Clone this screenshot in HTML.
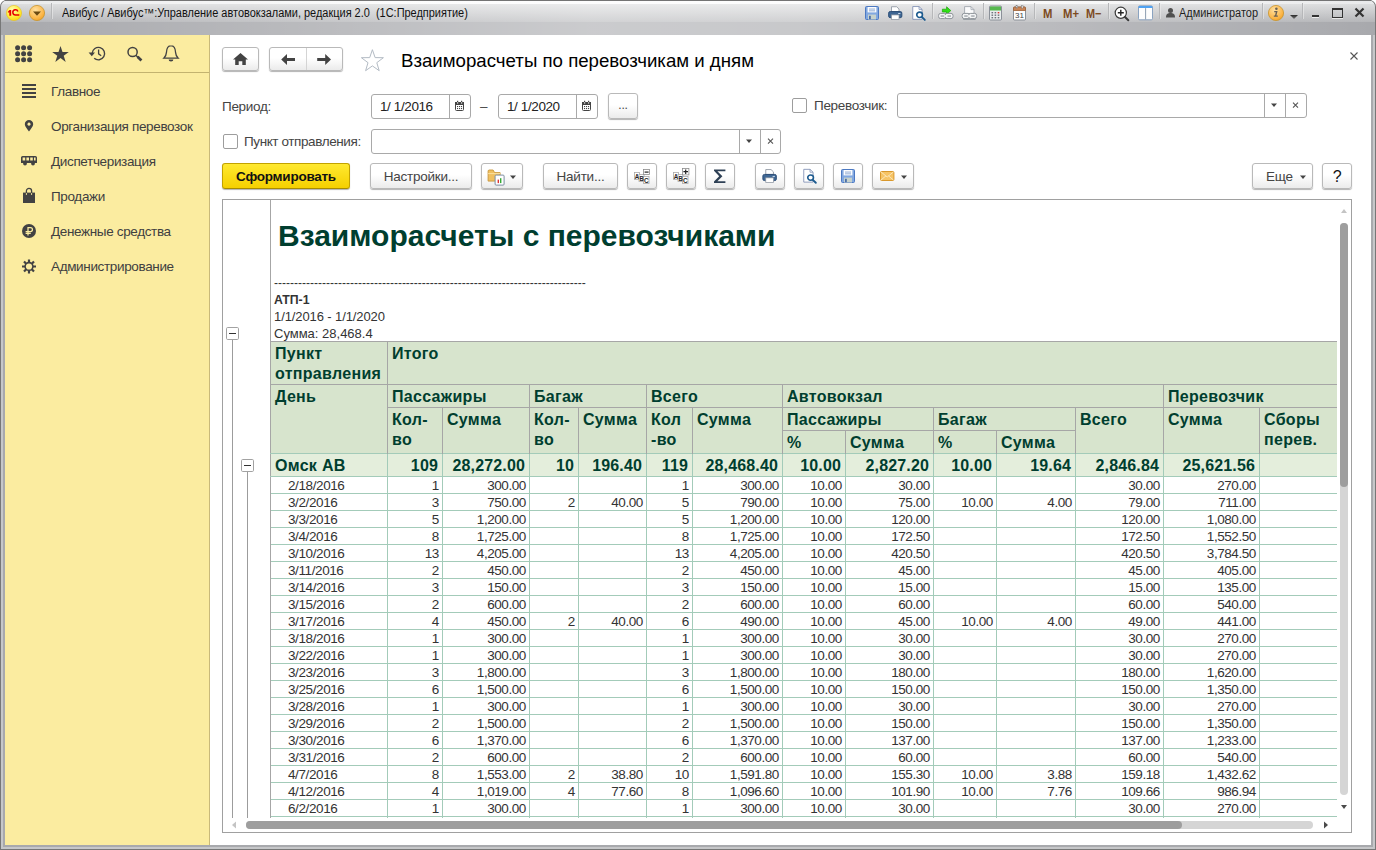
<!DOCTYPE html>
<html lang="ru"><head><meta charset="utf-8"><title>1C</title>
<style>
*{box-sizing:border-box;margin:0;padding:0}
html,body{width:1376px;height:850px;overflow:hidden}
body{font-family:"Liberation Sans",sans-serif;font-size:13px;color:#333;background:#fff;position:relative}
.abs{position:absolute}
#frame{position:absolute;left:0;top:0;width:1376px;height:850px;background:#a8a9ad;border-radius:7px 7px 0 0;box-shadow:inset 0 0 0 1px #777,inset 0 0 0 3px #c6c7c9}
#tbar{position:absolute;left:1px;top:0;width:1374px;height:35px;border-radius:7px 7px 0 0;background:linear-gradient(to right,rgba(255,255,255,0) 0,rgba(255,255,255,.85) 30%,rgba(255,255,255,.85) 70%,rgba(255,255,255,0) 100%) 0 1px/100% 3px no-repeat,linear-gradient(to right,rgba(255,255,255,0) 0,rgba(255,255,255,.4) 43%,rgba(255,255,255,.37) 58%,rgba(255,255,255,0) 100%),linear-gradient(#6e6e6e 0,#6e6e6e 1px,#e9eaeb 1px,#e9eaeb 3.5px,#dcddde 4.5px,#b6b7ba 21.5px,#a8a9ad 22px,#a8a9ad 35px)}
#ttl{position:absolute;left:62px;top:5px;font-size:12px;line-height:16px;color:#111;white-space:pre;transform:scaleX(.913);transform-origin:0 0}
#side{position:absolute;left:5px;top:35px;width:205px;height:810px;background:#fbeca0;border-right:1px solid #c9b97a}
#sidetb{position:absolute;left:0;top:0;width:204px;height:38px;border-bottom:1px solid #c3b36f}
.mi{position:absolute;left:46px;font-size:13.5px;color:#404040;white-space:nowrap;letter-spacing:-0.35px;line-height:16px}
#main{position:absolute;left:210px;top:35px;width:1161px;height:810px;background:#fff}
.btn{position:absolute;height:25px;border:1px solid #b9b9b9;border-radius:3px;background:linear-gradient(#fff 0,#fff 45%,#ebebeb 100%);box-shadow:0 1px 1px rgba(0,0,0,.3);font-size:13.5px;letter-spacing:-0.25px;color:#444;text-align:center;line-height:23px;white-space:nowrap}
.inp{position:absolute;height:25px;border:1px solid #a9a9a9;border-radius:3px;background:#fff}
.lbl{position:absolute;font-size:13.5px;letter-spacing:-0.3px;color:#444;white-space:nowrap}
.chk{position:absolute;width:15px;height:15px;border:1px solid #9d9d9d;border-radius:2px;background:#fff}
#rep{position:absolute;left:222px;top:199px;width:1130px;height:634px;border:1px solid #a0a0a0;background:#fff;overflow:hidden}
/* table */
.r{position:absolute;left:271px;width:1066px;height:17px;border-bottom:1px solid #a3cbb9}
.c{position:absolute;top:0;height:17px;font-size:13.5px;line-height:17px;color:#333;white-space:nowrap;overflow:hidden}
.c.n{text-align:right;padding-right:3.2px;letter-spacing:-0.45px}
.c.d{padding-left:17px;letter-spacing:-0.4px}
.vl{position:absolute;width:1px;background:#a3cbb9}
.hl{position:absolute;height:1px;background:#a6a6a6}
.hv{position:absolute;width:1px;background:#a6a6a6}
.h{position:absolute;font-weight:bold;font-size:16px;color:#003e2f;line-height:20px;white-space:nowrap;letter-spacing:0.3px}
.gb{position:absolute;font-weight:bold;font-size:16px;color:#003e2f;line-height:23px;white-space:nowrap;text-align:right;top:454px;height:23px;letter-spacing:0.15px}
</style></head><body>
<div id="frame"></div>
<div id="tbar"></div><div class="abs" style="left:5px;top:0;width:1366px;height:1px;background:#747474"></div>
<div id="ttl">Авибус / Авибус™:Управление автовокзалами, редакция 2.0  (1С:Предприятие)</div>
<div id="side"><div id="sidetb"></div>
<div class="mi" style="top:49px">Главное</div>
<div class="mi" style="top:84px">Организация перевозок</div>
<div class="mi" style="top:119px">Диспетчеризация</div>
<div class="mi" style="top:154px">Продажи</div>
<div class="mi" style="top:189px">Денежные средства</div>
<div class="mi" style="top:224px">Администрирование</div>
</div>
<div id="main"></div>
<!-- header bar of form -->
<div class="btn" style="left:222px;top:47px;width:37px;height:24px"></div>
<div class="btn" style="left:269px;top:47px;width:74px;height:24px"></div>
<div class="abs" style="left:306px;top:48px;width:1px;height:22px;background:#d4d4d4"></div>
<div class="abs" id="ftitle" style="left:401px;top:50px;font-size:18.67px;color:#000;white-space:nowrap">Взаиморасчеты по перевозчикам и дням</div>
<!-- row1 -->
<div class="lbl" style="left:222px;top:99px">Период:</div>
<div class="inp" style="left:371px;top:94px;width:100px"></div>
<div class="abs" style="left:449px;top:95px;width:1px;height:23px;background:#a9a9a9"></div>
<div class="lbl" style="left:380px;top:99px;color:#222;letter-spacing:-0.4px">1/ 1/2016</div>
<div class="lbl" style="left:480px;top:99px">–</div>
<div class="inp" style="left:498px;top:94px;width:100px"></div>
<div class="abs" style="left:576px;top:95px;width:1px;height:23px;background:#a9a9a9"></div>
<div class="lbl" style="left:507px;top:99px;color:#222;letter-spacing:-0.4px">1/ 1/2020</div>
<div class="btn" style="left:608px;top:93px;width:30px;height:26px;font-size:12px;line-height:22px">...</div>
<div class="chk" style="left:792px;top:98px"></div>
<div class="lbl" style="left:814px;top:98px">Перевозчик:</div>
<div class="inp" style="left:897px;top:93px;width:410px"></div>
<div class="abs" style="left:1264px;top:94px;width:1px;height:23px;background:#a9a9a9"></div>
<div class="abs" style="left:1285px;top:94px;width:1px;height:23px;background:#a9a9a9"></div>
<!-- row2 -->
<div class="chk" style="left:223px;top:134px"></div>
<div class="lbl" style="left:244px;top:134px;letter-spacing:-0.4px">Пункт отправления:</div>
<div class="inp" style="left:371px;top:129px;width:410px"></div>
<div class="abs" style="left:739px;top:130px;width:1px;height:23px;background:#a9a9a9"></div>
<div class="abs" style="left:760px;top:130px;width:1px;height:23px;background:#a9a9a9"></div>
<!-- row3 -->
<div class="btn" id="bform" style="left:222px;top:163px;height:26px;line-height:25px;width:128px;background:linear-gradient(#ffe930,#f5d000);border-color:#c2a200 #c2a200 #a88c00;color:#111;font-weight:bold">Сформировать</div>
<div class="btn" style="left:370px;top:163px;height:26px;line-height:25px;width:102px">Настройки...</div>
<div class="btn" style="left:481px;top:163px;height:26px;line-height:25px;width:42px"></div>
<div class="btn" style="left:543px;top:163px;height:26px;line-height:25px;width:75px">Найти...</div>
<div class="btn" style="left:627px;top:163px;height:26px;line-height:25px;width:30px"></div>
<div class="btn" style="left:666px;top:163px;height:26px;line-height:25px;width:30px"></div>
<div class="btn" style="left:705px;top:163px;height:26px;line-height:25px;width:30px"></div>
<div class="btn" style="left:755px;top:163px;height:26px;line-height:25px;width:30px"></div>
<div class="btn" style="left:794px;top:163px;height:26px;line-height:25px;width:30px"></div>
<div class="btn" style="left:833px;top:163px;height:26px;line-height:25px;width:30px"></div>
<div class="btn" style="left:872px;top:163px;height:26px;line-height:25px;width:42px"></div>
<div class="btn" style="left:1252px;top:163px;height:26px;line-height:25px;width:61px;text-align:left;padding-left:13px;font-size:13.5px">Еще</div>
<div class="btn" style="left:1322px;top:163px;height:26px;line-height:25px;width:30px;font-size:16px;color:#111">?</div>
<!-- report -->
<div id="rep"></div>
<div class="abs" style="left:270px;top:200px;width:1px;height:632px;background:#a6a6a6"></div>
<div class="abs" id="rtitle" style="left:278px;top:219px;font-size:30px;line-height:34px;font-weight:bold;color:#003e2f;white-space:nowrap">Взаиморасчеты с перевозчиками</div>
<div class="abs" style="left:274px;top:276px;font-size:12px;color:#333;white-space:nowrap;letter-spacing:0px" id="dash">------------------------------------------------------------------------------</div>
<div class="abs" style="left:274px;top:293px;font-size:12.3px;font-weight:bold;color:#333">АТП-1</div>
<div class="abs" style="left:274px;top:309px;font-size:13px;color:#333;letter-spacing:-0.1px">1/1/2016 - 1/1/2020</div>
<div class="abs" style="left:274px;top:326px;font-size:13px;color:#333">Сумма: 28,468.4</div>
<!-- table header bg -->
<div class="abs" style="left:271px;top:342px;width:1066px;height:112px;background:#d7e4cd"></div>
<div class="abs" style="left:271px;top:454px;width:1066px;height:22px;background:#e4eedc"></div>
<div class="r" style="top:477px"><div class="c d" style="left:0px;width:116px">2/18/2016</div><div class="c n" style="left:117px;width:54px">1</div><div class="c n" style="left:172px;width:86px">300.00</div><div class="c n" style="left:259px;width:48px"></div><div class="c n" style="left:308px;width:67px"></div><div class="c n" style="left:376px;width:45px">1</div><div class="c n" style="left:422px;width:89px">300.00</div><div class="c n" style="left:512px;width:62px">10.00</div><div class="c n" style="left:575px;width:87px">30.00</div><div class="c n" style="left:663px;width:62px"></div><div class="c n" style="left:726px;width:78px"></div><div class="c n" style="left:805px;width:87px">30.00</div><div class="c n" style="left:893px;width:95px">270.00</div></div>
<div class="r" style="top:494px"><div class="c d" style="left:0px;width:116px">3/2/2016</div><div class="c n" style="left:117px;width:54px">3</div><div class="c n" style="left:172px;width:86px">750.00</div><div class="c n" style="left:259px;width:48px">2</div><div class="c n" style="left:308px;width:67px">40.00</div><div class="c n" style="left:376px;width:45px">5</div><div class="c n" style="left:422px;width:89px">790.00</div><div class="c n" style="left:512px;width:62px">10.00</div><div class="c n" style="left:575px;width:87px">75.00</div><div class="c n" style="left:663px;width:62px">10.00</div><div class="c n" style="left:726px;width:78px">4.00</div><div class="c n" style="left:805px;width:87px">79.00</div><div class="c n" style="left:893px;width:95px">711.00</div></div>
<div class="r" style="top:511px"><div class="c d" style="left:0px;width:116px">3/3/2016</div><div class="c n" style="left:117px;width:54px">5</div><div class="c n" style="left:172px;width:86px">1,200.00</div><div class="c n" style="left:259px;width:48px"></div><div class="c n" style="left:308px;width:67px"></div><div class="c n" style="left:376px;width:45px">5</div><div class="c n" style="left:422px;width:89px">1,200.00</div><div class="c n" style="left:512px;width:62px">10.00</div><div class="c n" style="left:575px;width:87px">120.00</div><div class="c n" style="left:663px;width:62px"></div><div class="c n" style="left:726px;width:78px"></div><div class="c n" style="left:805px;width:87px">120.00</div><div class="c n" style="left:893px;width:95px">1,080.00</div></div>
<div class="r" style="top:528px"><div class="c d" style="left:0px;width:116px">3/4/2016</div><div class="c n" style="left:117px;width:54px">8</div><div class="c n" style="left:172px;width:86px">1,725.00</div><div class="c n" style="left:259px;width:48px"></div><div class="c n" style="left:308px;width:67px"></div><div class="c n" style="left:376px;width:45px">8</div><div class="c n" style="left:422px;width:89px">1,725.00</div><div class="c n" style="left:512px;width:62px">10.00</div><div class="c n" style="left:575px;width:87px">172.50</div><div class="c n" style="left:663px;width:62px"></div><div class="c n" style="left:726px;width:78px"></div><div class="c n" style="left:805px;width:87px">172.50</div><div class="c n" style="left:893px;width:95px">1,552.50</div></div>
<div class="r" style="top:545px"><div class="c d" style="left:0px;width:116px">3/10/2016</div><div class="c n" style="left:117px;width:54px">13</div><div class="c n" style="left:172px;width:86px">4,205.00</div><div class="c n" style="left:259px;width:48px"></div><div class="c n" style="left:308px;width:67px"></div><div class="c n" style="left:376px;width:45px">13</div><div class="c n" style="left:422px;width:89px">4,205.00</div><div class="c n" style="left:512px;width:62px">10.00</div><div class="c n" style="left:575px;width:87px">420.50</div><div class="c n" style="left:663px;width:62px"></div><div class="c n" style="left:726px;width:78px"></div><div class="c n" style="left:805px;width:87px">420.50</div><div class="c n" style="left:893px;width:95px">3,784.50</div></div>
<div class="r" style="top:562px"><div class="c d" style="left:0px;width:116px">3/11/2016</div><div class="c n" style="left:117px;width:54px">2</div><div class="c n" style="left:172px;width:86px">450.00</div><div class="c n" style="left:259px;width:48px"></div><div class="c n" style="left:308px;width:67px"></div><div class="c n" style="left:376px;width:45px">2</div><div class="c n" style="left:422px;width:89px">450.00</div><div class="c n" style="left:512px;width:62px">10.00</div><div class="c n" style="left:575px;width:87px">45.00</div><div class="c n" style="left:663px;width:62px"></div><div class="c n" style="left:726px;width:78px"></div><div class="c n" style="left:805px;width:87px">45.00</div><div class="c n" style="left:893px;width:95px">405.00</div></div>
<div class="r" style="top:579px"><div class="c d" style="left:0px;width:116px">3/14/2016</div><div class="c n" style="left:117px;width:54px">3</div><div class="c n" style="left:172px;width:86px">150.00</div><div class="c n" style="left:259px;width:48px"></div><div class="c n" style="left:308px;width:67px"></div><div class="c n" style="left:376px;width:45px">3</div><div class="c n" style="left:422px;width:89px">150.00</div><div class="c n" style="left:512px;width:62px">10.00</div><div class="c n" style="left:575px;width:87px">15.00</div><div class="c n" style="left:663px;width:62px"></div><div class="c n" style="left:726px;width:78px"></div><div class="c n" style="left:805px;width:87px">15.00</div><div class="c n" style="left:893px;width:95px">135.00</div></div>
<div class="r" style="top:596px"><div class="c d" style="left:0px;width:116px">3/15/2016</div><div class="c n" style="left:117px;width:54px">2</div><div class="c n" style="left:172px;width:86px">600.00</div><div class="c n" style="left:259px;width:48px"></div><div class="c n" style="left:308px;width:67px"></div><div class="c n" style="left:376px;width:45px">2</div><div class="c n" style="left:422px;width:89px">600.00</div><div class="c n" style="left:512px;width:62px">10.00</div><div class="c n" style="left:575px;width:87px">60.00</div><div class="c n" style="left:663px;width:62px"></div><div class="c n" style="left:726px;width:78px"></div><div class="c n" style="left:805px;width:87px">60.00</div><div class="c n" style="left:893px;width:95px">540.00</div></div>
<div class="r" style="top:613px"><div class="c d" style="left:0px;width:116px">3/17/2016</div><div class="c n" style="left:117px;width:54px">4</div><div class="c n" style="left:172px;width:86px">450.00</div><div class="c n" style="left:259px;width:48px">2</div><div class="c n" style="left:308px;width:67px">40.00</div><div class="c n" style="left:376px;width:45px">6</div><div class="c n" style="left:422px;width:89px">490.00</div><div class="c n" style="left:512px;width:62px">10.00</div><div class="c n" style="left:575px;width:87px">45.00</div><div class="c n" style="left:663px;width:62px">10.00</div><div class="c n" style="left:726px;width:78px">4.00</div><div class="c n" style="left:805px;width:87px">49.00</div><div class="c n" style="left:893px;width:95px">441.00</div></div>
<div class="r" style="top:630px"><div class="c d" style="left:0px;width:116px">3/18/2016</div><div class="c n" style="left:117px;width:54px">1</div><div class="c n" style="left:172px;width:86px">300.00</div><div class="c n" style="left:259px;width:48px"></div><div class="c n" style="left:308px;width:67px"></div><div class="c n" style="left:376px;width:45px">1</div><div class="c n" style="left:422px;width:89px">300.00</div><div class="c n" style="left:512px;width:62px">10.00</div><div class="c n" style="left:575px;width:87px">30.00</div><div class="c n" style="left:663px;width:62px"></div><div class="c n" style="left:726px;width:78px"></div><div class="c n" style="left:805px;width:87px">30.00</div><div class="c n" style="left:893px;width:95px">270.00</div></div>
<div class="r" style="top:647px"><div class="c d" style="left:0px;width:116px">3/22/2016</div><div class="c n" style="left:117px;width:54px">1</div><div class="c n" style="left:172px;width:86px">300.00</div><div class="c n" style="left:259px;width:48px"></div><div class="c n" style="left:308px;width:67px"></div><div class="c n" style="left:376px;width:45px">1</div><div class="c n" style="left:422px;width:89px">300.00</div><div class="c n" style="left:512px;width:62px">10.00</div><div class="c n" style="left:575px;width:87px">30.00</div><div class="c n" style="left:663px;width:62px"></div><div class="c n" style="left:726px;width:78px"></div><div class="c n" style="left:805px;width:87px">30.00</div><div class="c n" style="left:893px;width:95px">270.00</div></div>
<div class="r" style="top:664px"><div class="c d" style="left:0px;width:116px">3/23/2016</div><div class="c n" style="left:117px;width:54px">3</div><div class="c n" style="left:172px;width:86px">1,800.00</div><div class="c n" style="left:259px;width:48px"></div><div class="c n" style="left:308px;width:67px"></div><div class="c n" style="left:376px;width:45px">3</div><div class="c n" style="left:422px;width:89px">1,800.00</div><div class="c n" style="left:512px;width:62px">10.00</div><div class="c n" style="left:575px;width:87px">180.00</div><div class="c n" style="left:663px;width:62px"></div><div class="c n" style="left:726px;width:78px"></div><div class="c n" style="left:805px;width:87px">180.00</div><div class="c n" style="left:893px;width:95px">1,620.00</div></div>
<div class="r" style="top:681px"><div class="c d" style="left:0px;width:116px">3/25/2016</div><div class="c n" style="left:117px;width:54px">6</div><div class="c n" style="left:172px;width:86px">1,500.00</div><div class="c n" style="left:259px;width:48px"></div><div class="c n" style="left:308px;width:67px"></div><div class="c n" style="left:376px;width:45px">6</div><div class="c n" style="left:422px;width:89px">1,500.00</div><div class="c n" style="left:512px;width:62px">10.00</div><div class="c n" style="left:575px;width:87px">150.00</div><div class="c n" style="left:663px;width:62px"></div><div class="c n" style="left:726px;width:78px"></div><div class="c n" style="left:805px;width:87px">150.00</div><div class="c n" style="left:893px;width:95px">1,350.00</div></div>
<div class="r" style="top:698px"><div class="c d" style="left:0px;width:116px">3/28/2016</div><div class="c n" style="left:117px;width:54px">1</div><div class="c n" style="left:172px;width:86px">300.00</div><div class="c n" style="left:259px;width:48px"></div><div class="c n" style="left:308px;width:67px"></div><div class="c n" style="left:376px;width:45px">1</div><div class="c n" style="left:422px;width:89px">300.00</div><div class="c n" style="left:512px;width:62px">10.00</div><div class="c n" style="left:575px;width:87px">30.00</div><div class="c n" style="left:663px;width:62px"></div><div class="c n" style="left:726px;width:78px"></div><div class="c n" style="left:805px;width:87px">30.00</div><div class="c n" style="left:893px;width:95px">270.00</div></div>
<div class="r" style="top:715px"><div class="c d" style="left:0px;width:116px">3/29/2016</div><div class="c n" style="left:117px;width:54px">2</div><div class="c n" style="left:172px;width:86px">1,500.00</div><div class="c n" style="left:259px;width:48px"></div><div class="c n" style="left:308px;width:67px"></div><div class="c n" style="left:376px;width:45px">2</div><div class="c n" style="left:422px;width:89px">1,500.00</div><div class="c n" style="left:512px;width:62px">10.00</div><div class="c n" style="left:575px;width:87px">150.00</div><div class="c n" style="left:663px;width:62px"></div><div class="c n" style="left:726px;width:78px"></div><div class="c n" style="left:805px;width:87px">150.00</div><div class="c n" style="left:893px;width:95px">1,350.00</div></div>
<div class="r" style="top:732px"><div class="c d" style="left:0px;width:116px">3/30/2016</div><div class="c n" style="left:117px;width:54px">6</div><div class="c n" style="left:172px;width:86px">1,370.00</div><div class="c n" style="left:259px;width:48px"></div><div class="c n" style="left:308px;width:67px"></div><div class="c n" style="left:376px;width:45px">6</div><div class="c n" style="left:422px;width:89px">1,370.00</div><div class="c n" style="left:512px;width:62px">10.00</div><div class="c n" style="left:575px;width:87px">137.00</div><div class="c n" style="left:663px;width:62px"></div><div class="c n" style="left:726px;width:78px"></div><div class="c n" style="left:805px;width:87px">137.00</div><div class="c n" style="left:893px;width:95px">1,233.00</div></div>
<div class="r" style="top:749px"><div class="c d" style="left:0px;width:116px">3/31/2016</div><div class="c n" style="left:117px;width:54px">2</div><div class="c n" style="left:172px;width:86px">600.00</div><div class="c n" style="left:259px;width:48px"></div><div class="c n" style="left:308px;width:67px"></div><div class="c n" style="left:376px;width:45px">2</div><div class="c n" style="left:422px;width:89px">600.00</div><div class="c n" style="left:512px;width:62px">10.00</div><div class="c n" style="left:575px;width:87px">60.00</div><div class="c n" style="left:663px;width:62px"></div><div class="c n" style="left:726px;width:78px"></div><div class="c n" style="left:805px;width:87px">60.00</div><div class="c n" style="left:893px;width:95px">540.00</div></div>
<div class="r" style="top:766px"><div class="c d" style="left:0px;width:116px">4/7/2016</div><div class="c n" style="left:117px;width:54px">8</div><div class="c n" style="left:172px;width:86px">1,553.00</div><div class="c n" style="left:259px;width:48px">2</div><div class="c n" style="left:308px;width:67px">38.80</div><div class="c n" style="left:376px;width:45px">10</div><div class="c n" style="left:422px;width:89px">1,591.80</div><div class="c n" style="left:512px;width:62px">10.00</div><div class="c n" style="left:575px;width:87px">155.30</div><div class="c n" style="left:663px;width:62px">10.00</div><div class="c n" style="left:726px;width:78px">3.88</div><div class="c n" style="left:805px;width:87px">159.18</div><div class="c n" style="left:893px;width:95px">1,432.62</div></div>
<div class="r" style="top:783px"><div class="c d" style="left:0px;width:116px">4/12/2016</div><div class="c n" style="left:117px;width:54px">4</div><div class="c n" style="left:172px;width:86px">1,019.00</div><div class="c n" style="left:259px;width:48px">4</div><div class="c n" style="left:308px;width:67px">77.60</div><div class="c n" style="left:376px;width:45px">8</div><div class="c n" style="left:422px;width:89px">1,096.60</div><div class="c n" style="left:512px;width:62px">10.00</div><div class="c n" style="left:575px;width:87px">101.90</div><div class="c n" style="left:663px;width:62px">10.00</div><div class="c n" style="left:726px;width:78px">7.76</div><div class="c n" style="left:805px;width:87px">109.66</div><div class="c n" style="left:893px;width:95px">986.94</div></div>
<div class="r" style="top:800px"><div class="c d" style="left:0px;width:116px">6/2/2016</div><div class="c n" style="left:117px;width:54px">1</div><div class="c n" style="left:172px;width:86px">300.00</div><div class="c n" style="left:259px;width:48px"></div><div class="c n" style="left:308px;width:67px"></div><div class="c n" style="left:376px;width:45px">1</div><div class="c n" style="left:422px;width:89px">300.00</div><div class="c n" style="left:512px;width:62px">10.00</div><div class="c n" style="left:575px;width:87px">30.00</div><div class="c n" style="left:663px;width:62px"></div><div class="c n" style="left:726px;width:78px"></div><div class="c n" style="left:805px;width:87px">30.00</div><div class="c n" style="left:893px;width:95px">270.00</div></div><!-- header lines -->
<div class="hl" style="left:270px;top:341px;width:1067px"></div>
<div class="hl" style="left:270px;top:384px;width:1067px"></div>
<div class="hl" style="left:387px;top:407px;width:950px"></div>
<div class="hl" style="left:782px;top:430px;width:294px"></div>
<div class="hl" style="left:270px;top:453px;width:1067px;background:#a3cbb9"></div>
<div class="hl" style="left:270px;top:476px;width:1067px;background:#a3cbb9"></div>
<div class="hv" style="left:387px;top:341px;height:113px"></div>
<div class="hv" style="left:442px;top:407px;height:47px"></div>
<div class="hv" style="left:529px;top:384px;height:70px"></div>
<div class="hv" style="left:578px;top:407px;height:47px"></div>
<div class="hv" style="left:646px;top:384px;height:70px"></div>
<div class="hv" style="left:692px;top:407px;height:47px"></div>
<div class="hv" style="left:782px;top:384px;height:70px"></div>
<div class="hv" style="left:845px;top:430px;height:24px"></div>
<div class="hv" style="left:933px;top:407px;height:47px"></div>
<div class="hv" style="left:996px;top:430px;height:24px"></div>
<div class="hv" style="left:1075px;top:407px;height:47px"></div>
<div class="hv" style="left:1163px;top:384px;height:70px"></div>
<div class="hv" style="left:1259px;top:407px;height:47px"></div>
<!-- header text -->
<div class="h" style="left:275px;top:344px">Пункт<br>отправления</div>
<div class="h" style="left:392px;top:344px">Итого</div>
<div class="h" style="left:275px;top:387px">День</div>
<div class="h" style="left:392px;top:387px">Пассажиры</div>
<div class="h" style="left:534px;top:387px">Багаж</div>
<div class="h" style="left:651px;top:387px">Всего</div>
<div class="h" style="left:787px;top:387px">Автовокзал</div>
<div class="h" style="left:1168px;top:387px">Перевозчик</div>
<div class="h" style="left:392px;top:410px">Кол-<br>во</div>
<div class="h" style="left:447px;top:410px">Сумма</div>
<div class="h" style="left:534px;top:410px">Кол-<br>во</div>
<div class="h" style="left:583px;top:410px">Сумма</div>
<div class="h" style="left:651px;top:410px">Кол<br>-во</div>
<div class="h" style="left:697px;top:410px">Сумма</div>
<div class="h" style="left:787px;top:410px">Пассажиры</div>
<div class="h" style="left:938px;top:410px">Багаж</div>
<div class="h" style="left:1080px;top:410px">Всего</div>
<div class="h" style="left:1168px;top:410px">Сумма</div>
<div class="h" style="left:1264px;top:410px">Сборы<br>перев.</div>
<div class="h" style="left:787px;top:433px">%</div>
<div class="h" style="left:850px;top:433px">Сумма</div>
<div class="h" style="left:938px;top:433px">%</div>
<div class="h" style="left:1001px;top:433px">Сумма</div>
<!-- group row -->
<div class="gb" style="left:275px;text-align:left;letter-spacing:0.3px">Омск АВ</div>
<div class="gb" style="left:388px;width:50px">109</div>
<div class="gb" style="left:443px;width:82px">28,272.00</div>
<div class="gb" style="left:530px;width:44px">10</div>
<div class="gb" style="left:579px;width:63px">196.40</div>
<div class="gb" style="left:647px;width:41px">119</div>
<div class="gb" style="left:693px;width:85px">28,468.40</div>
<div class="gb" style="left:783px;width:58px">10.00</div>
<div class="gb" style="left:846px;width:83px">2,827.20</div>
<div class="gb" style="left:934px;width:58px">10.00</div>
<div class="gb" style="left:997px;width:74px">19.64</div>
<div class="gb" style="left:1076px;width:83px">2,846.84</div>
<div class="gb" style="left:1164px;width:91px">25,621.56</div>
<!-- data vertical lines -->
<div class="vl" style="left:387px;top:454px;height:364px"></div>
<div class="vl" style="left:442px;top:454px;height:364px"></div>
<div class="vl" style="left:529px;top:454px;height:364px"></div>
<div class="vl" style="left:578px;top:454px;height:364px"></div>
<div class="vl" style="left:646px;top:454px;height:364px"></div>
<div class="vl" style="left:692px;top:454px;height:364px"></div>
<div class="vl" style="left:782px;top:454px;height:364px"></div>
<div class="vl" style="left:845px;top:454px;height:364px"></div>
<div class="vl" style="left:933px;top:454px;height:364px"></div>
<div class="vl" style="left:996px;top:454px;height:364px"></div>
<div class="vl" style="left:1075px;top:454px;height:364px"></div>
<div class="vl" style="left:1163px;top:454px;height:364px"></div>
<div class="vl" style="left:1259px;top:454px;height:364px"></div>
<!-- scrollbars cover -->
<div class="abs" style="left:223px;top:818px;width:1128px;height:14px;background:#fff"></div>
<div class="abs" style="left:1337px;top:200px;width:14px;height:632px;background:#fff"></div>
<div class="abs" style="left:246px;top:821px;width:1067px;height:8px;border-radius:4px;background:#d5d5d5"></div>
<div class="abs" style="left:246px;top:821px;width:936px;height:8px;border-radius:4px;background:#9e9e9e"></div>
<div class="abs" style="left:1340px;top:223px;width:8px;height:572px;border-radius:4px;background:#d5d5d5"></div>
<div class="abs" style="left:1340px;top:223px;width:8px;height:264px;border-radius:4px;background:#9e9e9e"></div>
<!-- ===== titlebar icons ===== -->
<svg class="abs" style="left:0;top:0" width="1376" height="35" viewBox="0 0 1376 35">
<defs>
<radialGradient id="g1c" cx="0.4" cy="0.3" r="0.8"><stop offset="0" stop-color="#fffcb8"/><stop offset="0.55" stop-color="#ffee40"/><stop offset="1" stop-color="#fbd000"/></radialGradient>
<radialGradient id="gor" cx="0.4" cy="0.3" r="0.8"><stop offset="0" stop-color="#ffe0a0"/><stop offset="0.7" stop-color="#fbb444"/><stop offset="1" stop-color="#e89a20"/></radialGradient>
<linearGradient id="gtri" x1="0" y1="0" x2="0" y2="1"><stop offset="0" stop-color="#2a2a2a"/><stop offset="1" stop-color="#777"/></linearGradient>
</defs>
<!-- 1C logo -->
<circle cx="14" cy="13" r="7.6" fill="url(#g1c)" stroke="#e9c21a" stroke-width="0.6"/>
<path d="M7.9 11.7 L9.5 10.1 L11.2 10.1 L11.2 15.7 L9.3 15.7 L9.3 12.3 L7.9 12.8 Z" fill="#e60000"/>
<path d="M17.9 11.6 A2.6 2.6 0 1 0 15.4 15 L19.3 15" fill="none" stroke="#e60000" stroke-width="1.5"/>
<!-- orange dropdown -->
<circle cx="37" cy="13" r="7.6" fill="url(#gor)" stroke="#c9962f" stroke-width="0.8"/>
<path d="M33 11.6 h8 l-4 4.2z" fill="#6b4a12"/>
<rect x="51" y="3" width="1" height="16" fill="#b6b7b9"/><rect x="52" y="3" width="1" height="16" fill="#eeeeef" opacity=".55"/>
<!-- save -->
<g transform="translate(865,6)"><rect x="0.5" y="0.5" width="13" height="13" rx="1" fill="#82a8e0" stroke="#4c79c2"/><rect x="2.6" y="1" width="8.8" height="5.4" fill="#fbfcfe"/><rect x="4" y="2.6" width="6" height="0.9" fill="#8aa6d0"/><rect x="4" y="4.4" width="6" height="0.9" fill="#8aa6d0"/><rect x="3" y="8.6" width="8" height="4.9" fill="#c7d2cc"/><rect x="4" y="9.8" width="1.8" height="3.4" fill="#4a6eaa"/></g>
<!-- print -->
<g transform="translate(888.2,6) scale(0.94,0.93)"><path d="M3.5 6 V0.8 h5.5 l2.5 2.5 V6z" fill="#fff" stroke="#8c94a0" stroke-width="0.9"/><rect x="0.5" y="6" width="14" height="6.5" rx="1.6" fill="#3f6794" stroke="#274a74"/><rect x="3.5" y="9.6" width="8" height="5" fill="#fff" stroke="#8c94a0" stroke-width="0.8"/><rect x="10.6" y="7.6" width="2.4" height="1" fill="#cfe0f4"/></g>
<!-- preview -->
<g transform="translate(912,6) scale(0.95,0.9)"><path d="M0.8 0.6 h6.6 l3.2 3.2 v11 h-9.8z" fill="#fff" stroke="#7d8db2" stroke-width="0.9"/><path d="M7.4 0.6 v3.2 h3.2" fill="none" stroke="#7d8db2" stroke-width="0.8"/><circle cx="8" cy="9.8" r="3" fill="#fff" stroke="#1d5b8f" stroke-width="1.7"/><path d="M10.3 12.2 l3.2 3.3" stroke="#1d5b8f" stroke-width="2" stroke-linecap="round"/></g>
<rect x="932" y="3" width="1" height="16" fill="#b6b7b9"/><rect x="933" y="3" width="1" height="16" fill="#eeeeef" opacity=".55"/>
<!-- link with arrow -->
<g transform="translate(938,6)"><path d="M4.4 3.2 h4.2 v-2.4 l4.2 3.8 l-4.2 3.8 v-2.4 h-4.2z" fill="#2fe016" stroke="#1aa30a" stroke-width="0.7"/><rect x="0.6" y="7.4" width="8" height="5.2" rx="2" fill="#f4f5f6" stroke="#8f949a" stroke-width="1"/><rect x="7" y="7.4" width="8" height="5.2" rx="2" fill="#f4f5f6" stroke="#8f949a" stroke-width="1"/><rect x="2.6" y="9.4" width="4" height="1.3" fill="#9aa0a6"/><rect x="9" y="9.4" width="4" height="1.3" fill="#9aa0a6"/><rect x="6" y="9.2" width="3.6" height="1.6" fill="#f4f5f6"/></g>
<g transform="translate(961.6,6)"><path d="M3 8 V0.6 h6.4 l3 3 V8z" fill="#fbfbfc" stroke="#a0a6ae" stroke-width="0.9"/><path d="M9.4 0.6 v3 h3" fill="none" stroke="#a0a6ae" stroke-width="0.8"/><rect x="0.6" y="7.4" width="8" height="5.2" rx="2" fill="#f4f5f6" stroke="#8f949a" stroke-width="1"/><rect x="7" y="7.4" width="8" height="5.2" rx="2" fill="#f4f5f6" stroke="#8f949a" stroke-width="1"/><rect x="2.6" y="9.4" width="4" height="1.3" fill="#9aa0a6"/><rect x="9" y="9.4" width="4" height="1.3" fill="#9aa0a6"/><rect x="6" y="9.2" width="3.6" height="1.6" fill="#f4f5f6"/><rect x="1.6" y="12.8" width="12.4" height="1.2" fill="#9aa0a6"/></g>
<rect x="983" y="3" width="1" height="16" fill="#b6b7b9"/><rect x="984" y="3" width="1" height="16" fill="#eeeeef" opacity=".55"/>
<!-- calculator -->
<g transform="translate(989,5.5)"><rect x="0.5" y="0.5" width="12" height="14" rx="1" fill="#e9ecee" stroke="#8a9098"/><rect x="1" y="1" width="11" height="4" fill="#57b94f"/><g fill="#6e747c"><rect x="2.5" y="6.5" width="1.6" height="1.4"/><rect x="5.6" y="6.5" width="1.6" height="1.4"/><rect x="2.5" y="9" width="1.6" height="1.4"/><rect x="5.6" y="9" width="1.6" height="1.4"/><rect x="8.7" y="9" width="1.6" height="1.4"/><rect x="2.5" y="11.5" width="1.6" height="1.4"/><rect x="5.6" y="11.5" width="1.6" height="1.4"/><rect x="8.7" y="11.5" width="1.6" height="1.4"/></g><rect x="8.7" y="6.5" width="1.6" height="1.4" fill="#e03030"/></g>
<!-- calendar -->
<g transform="translate(1013,5.5)"><rect x="0.5" y="1.5" width="12" height="13" rx="1" fill="#fdfdfd" stroke="#8a9098"/><path d="M0.5 5 v-2.5 a1 1 0 0 1 1 -1 h10 a1 1 0 0 1 1 1 v2.5z" fill="#c98455" stroke="#9e5f34" stroke-width="0.8"/><rect x="3" y="0" width="1.4" height="2.6" fill="#eee" stroke="#777" stroke-width="0.4"/><rect x="8.6" y="0" width="1.4" height="2.6" fill="#eee" stroke="#777" stroke-width="0.4"/><text x="6.5" y="12.8" font-family="Liberation Sans" font-size="8" text-anchor="middle" fill="#444">31</text></g>
<rect x="1034" y="3" width="1" height="16" fill="#b6b7b9"/><rect x="1035" y="3" width="1" height="16" fill="#eeeeef" opacity=".55"/>
<g font-family="Liberation Sans" font-weight="bold" font-size="13" fill="#7d4a22"><text x="1043" y="17.8" textLength="9.4" lengthAdjust="spacingAndGlyphs">M</text><text x="1063" y="17.8" textLength="16" lengthAdjust="spacingAndGlyphs">M+</text><text x="1086" y="17.8" textLength="15.4" lengthAdjust="spacingAndGlyphs">M−</text></g>
<rect x="1108" y="3" width="1" height="16" fill="#b6b7b9"/><rect x="1109" y="3" width="1" height="16" fill="#eeeeef" opacity=".55"/>
<!-- zoom -->
<g transform="translate(1114,6)"><circle cx="6.8" cy="6.8" r="5.6" fill="#fff" stroke="#3a3a3a" stroke-width="1.2"/><path d="M3.8 6.8 h6 M6.8 3.8 v6" stroke="#222" stroke-width="1.4"/><path d="M11 11 l3.3 3.3" stroke="#3a3a3a" stroke-width="2" stroke-linecap="round"/></g>
<!-- panels -->
<g transform="translate(1138,5.3)"><rect x="0.5" y="0.5" width="14" height="14" rx="1.2" fill="#fdfdfd" stroke="#7f9bbb" stroke-width="0.9"/><path d="M0.6 2.8 v-1.2 a1 1 0 0 1 1 -1 h11.8 a1 1 0 0 1 1 1 v1.2z" fill="#4fa2f2"/><rect x="7.1" y="2.8" width="1" height="11.4" fill="#8c9db0"/></g>
<rect x="1159" y="3" width="1" height="16" fill="#b6b7b9"/><rect x="1160" y="3" width="1" height="16" fill="#eeeeef" opacity=".55"/>
<!-- user -->
<g transform="translate(1166,8)" fill="#505050"><circle cx="4.5" cy="2.4" r="2.5"/><path d="M0 9.5 c0 -3.4 1.8 -4.4 4.5 -4.4 s4.5 1 4.5 4.4z"/></g>
<rect x="1262" y="3" width="1" height="16" fill="#b6b7b9"/><rect x="1263" y="3" width="1" height="16" fill="#eeeeef" opacity=".55"/>
<!-- info -->
<circle cx="1276" cy="13" r="7.6" fill="url(#gor)" stroke="#c9962f" stroke-width="0.8"/>
<g fill="#6a6154"><circle cx="1276.4" cy="8.7" r="1.3"/><path d="M1274.2 11 h3.4 l-1.2 4.6 h1.4 v1.2 h-4 v-1.2 h1.2 l0.8 -3.4 h-1.6z"/></g>
<path d="M1290 15 h8 l-4 4z" fill="url(#gtri)"/>
<rect x="1302" y="3" width="1" height="16" fill="#b6b7b9"/><rect x="1303" y="3" width="1" height="16" fill="#eeeeef" opacity=".55"/>
<!-- win controls -->
<rect x="1312" y="15" width="7" height="2" fill="#333"/><rect x="1312" y="17" width="7" height="1" fill="#eee"/>
<rect x="1332.5" y="8.5" width="10" height="9" fill="none" stroke="#333"/><rect x="1332" y="8" width="11" height="2" fill="#333"/><rect x="1332" y="18" width="11" height="1" fill="#e8e8e8"/>
<path d="M1355.5 8.5 l8 8 M1363.5 8.5 l-8 8" stroke="#333" stroke-width="2.2"/>
</svg>
<div class="abs" style="left:1179px;top:5px;font-size:12px;line-height:16px;color:#1f1f1f;white-space:nowrap;transform:scaleX(.913);transform-origin:0 0" id="adm">Администратор</div>
<!-- ===== sidebar toolbar icons ===== -->
<svg class="abs" style="left:5px;top:36px" width="204" height="36" viewBox="5 36 204 36">
<g fill="#424242"><circle cx="17.6" cy="47.7" r="2.5"/><circle cx="23.6" cy="47.7" r="2.5"/><circle cx="29.6" cy="47.7" r="2.5"/><circle cx="17.6" cy="53.7" r="2.5"/><circle cx="23.6" cy="53.7" r="2.5"/><circle cx="29.6" cy="53.7" r="2.5"/><circle cx="17.6" cy="59.7" r="2.5"/><circle cx="23.6" cy="59.7" r="2.5"/><circle cx="29.6" cy="59.7" r="2.5"/>
<path d="M60.5 45.9 L62.5 51.9 L68.8 51.9 L63.7 55.7 L65.7 61.9 L60.5 58.1 L55.3 61.9 L57.3 55.7 L52.2 51.9 L58.5 51.9 Z"/></g>
<g fill="none" stroke="#424242" stroke-width="1.4"><path d="M92.2 53.2 A6.2 6.2 0 1 1 94.2 58.2"/><path d="M98.6 49.6 v4.3 l2.6 1.8" stroke-width="1.3"/></g>
<path d="M88.6 52.4 h6.4 l-3.2 3.8z" fill="#424242"/>
<circle cx="132.6" cy="52" r="4.6" fill="none" stroke="#424242" stroke-width="1.5"/><path d="M135.8 55.2 l2.4 2.2" stroke="#424242" stroke-width="1.4"/><path d="M137.6 56.8 l3.8 3.6" stroke="#424242" stroke-width="2.8" stroke-linecap="butt"/>
<path d="M171 45.6 c-3.6 0 -4.4 3.4 -4.6 7 c-0.1 2.4 -1.2 4.2 -2.6 5.6 h14.4 c-1.4 -1.4 -2.5 -3.2 -2.6 -5.6 c-0.2 -3.6 -1 -7 -4.6 -7z" fill="none" stroke="#424242" stroke-width="1.3"/><path d="M168.6 59.6 h4.8 a2.4 2 0 0 1 -4.8 0z" fill="#424242"/>
</svg>
<!-- ===== sidebar menu icons ===== -->
<svg class="abs" style="left:5px;top:73px" width="60" height="215" viewBox="5 73 60 215">
<g fill="#424242"><rect x="22" y="84" width="14" height="2"/><rect x="22" y="88" width="14" height="2"/><rect x="22" y="92" width="14" height="2"/><rect x="22" y="96" width="14" height="2"/>
<path d="M29 120 a4.2 4.2 0 0 1 4.2 4.2 c0 2.6 -2.6 4.6 -4.2 7.4 c-1.6 -2.8 -4.2 -4.8 -4.2 -7.4 a4.2 4.2 0 0 1 4.2 -4.2z M29 122.6 a1.6 1.6 0 1 0 0.01 0z" fill-rule="evenodd"/>
<!-- bus -->
<path d="M22.6 156 h12.8 a1.6 1.6 0 0 1 1.6 1.6 v5.4 h-16 v-5.4 a1.6 1.6 0 0 1 1.6 -1.6z M22.6 157.6 v3 h2.6 v-3z M26.4 157.6 v3 h2.6 v-3z M30.2 157.6 v3 h2.6 v-3z M34 157.6 v3 h1.6 v-3z" fill-rule="evenodd"/><circle cx="25" cy="163.6" r="1.9"/><circle cx="33" cy="163.6" r="1.9"/>
<!-- bag -->
<path d="M23 192.6 h12 v10.4 h-12z"/></g>
<path d="M26.4 194.6 v-3.6 a2.6 2.6 0 0 1 5.2 0 v3.6" fill="none" stroke="#424242" stroke-width="1.3"/>
<path d="M26.4 193 v2 M31.6 193 v2" stroke="#fbeca0" stroke-width="0.9"/>
<!-- ruble -->
<circle cx="29" cy="231" r="7" fill="#424242"/>
<path d="M28 235.6 v-8 h2.5 a1.9 1.9 0 0 1 0 3.9 h-4.9 M25.6 233.4 h5.2" fill="none" stroke="#fbeca0" stroke-width="1.25"/>
<!-- gear -->
<g transform="translate(29,266.5)"><g stroke="#424242" stroke-width="2.2"><path d="M0 -7 v14 M-7 0 h14 M-5 -5 l10 10 M-5 5 l10 -10"/></g><circle r="4.7" fill="#424242"/><circle r="3.1" fill="#fbeca0"/></g>
</svg>
<!-- ===== form icons ===== -->
<svg class="abs" style="left:210px;top:40px" width="1161" height="155" viewBox="210 40 1161 155">
<!-- home -->
<path d="M240.5 52.9 l7.5 6.7 h-2.2 v5.4 h-3.5 v-3.8 h-3.6 v3.8 h-3.5 v-5.4 h-2.2z" fill="#434343"/>
<!-- arrows -->
<path d="M281.2 59.5 l5.8 -5.5 v4.1 h8 v2.8 h-8 v4.1z" fill="#434343"/>
<path d="M331 59.5 l-5.8 -5.5 v4.1 h-8 v2.8 h8 v4.1z" fill="#434343"/>
<!-- star outline -->
<path d="M372.4 49.7 L375.1 57.6 L383.4 57.7 L376.8 62.7 L379.2 70.7 L372.4 65.9 L365.6 70.7 L368.0 62.7 L361.4 57.7 L369.7 57.6 Z" fill="#fff" stroke="#b3bbc4" stroke-width="1"/>
<!-- close x -->
<path d="M1350.5 52.5 l7 7 M1357.5 52.5 l-7 7" stroke="#555" stroke-width="1.1"/>
<!-- calendar mini icons -->
<g><rect x="455.5" y="102.5" width="8" height="8" rx="1" fill="#fff" stroke="#444"/><rect x="455" y="102" width="9" height="3" fill="#444"/><rect x="457" y="100.8" width="1.2" height="1.6" fill="#444"/><rect x="461" y="100.8" width="1.2" height="1.6" fill="#444"/><rect x="457" y="102.4" width="1.2" height="1.1" fill="#fff"/><rect x="461" y="102.4" width="1.2" height="1.1" fill="#fff"/><g fill="#444"><rect x="457" y="106" width="1.1" height="1.1"/><rect x="459" y="106" width="1.1" height="1.1"/><rect x="461" y="106" width="1.1" height="1.1"/><rect x="457" y="108" width="1.1" height="1.1"/><rect x="459" y="108" width="1.1" height="1.1"/><rect x="461" y="108" width="1.1" height="1.1"/></g></g>
<g transform="translate(127,0)"><rect x="455.5" y="102.5" width="8" height="8" rx="1" fill="#fff" stroke="#444"/><rect x="455" y="102" width="9" height="3" fill="#444"/><rect x="457" y="100.8" width="1.2" height="1.6" fill="#444"/><rect x="461" y="100.8" width="1.2" height="1.6" fill="#444"/><rect x="457" y="102.4" width="1.2" height="1.1" fill="#fff"/><rect x="461" y="102.4" width="1.2" height="1.1" fill="#fff"/><g fill="#444"><rect x="457" y="106" width="1.1" height="1.1"/><rect x="459" y="106" width="1.1" height="1.1"/><rect x="461" y="106" width="1.1" height="1.1"/><rect x="457" y="108" width="1.1" height="1.1"/><rect x="459" y="108" width="1.1" height="1.1"/><rect x="461" y="108" width="1.1" height="1.1"/></g></g>
<!-- dropdown arrows and x -->
<path d="M1271 103.6 h6 l-3 3.4z" fill="#444"/><path d="M1293 102.6 l5 5 M1298 102.6 l-5 5" stroke="#555" stroke-width="1.1"/>
<path d="M746 139.6 h6 l-3 3.4z" fill="#444"/><path d="M768 138.6 l5 5 M773 138.6 l-5 5" stroke="#555" stroke-width="1.1"/>
<!-- folder w/ report -->
<g transform="translate(487.6,167.6)"><path d="M0.5 3 v10.5 h12 v-8.5 h-5.5 l-1.5 -2.6 h-4z" fill="#f0c060" stroke="#c8963a" stroke-width="0.9"/><path d="M0.5 6 h12" stroke="#fbe0a0" stroke-width="1"/><rect x="7.5" y="7.5" width="9" height="10" rx="1" fill="#fff" stroke="#7d8da2"/><rect x="10" y="12" width="1.4" height="3.5" fill="#d33"/><rect x="12.4" y="10.6" width="1.4" height="4.9" fill="#3a3"/></g>
<path d="M510 175.6 h6 l-3 3.4z" fill="#444"/>
<!-- ABC- -->
<g font-family="Liberation Sans" font-weight="bold" font-size="7" fill="#222"><rect x="634.5" y="172.5" width="5" height="7" fill="#fff" stroke="#a8a8a8" stroke-width="0.8"/><rect x="639" y="174.5" width="5" height="7" fill="#fff" stroke="#a8a8a8" stroke-width="0.8"/><rect x="643.5" y="176.5" width="5.5" height="7" fill="#fff" stroke="#a8a8a8" stroke-width="0.8"/><text x="634.8" y="178.7" textLength="4.4" lengthAdjust="spacingAndGlyphs">A</text><text x="639.4" y="180.7" textLength="4.2" lengthAdjust="spacingAndGlyphs">B</text><text x="644" y="182.7" textLength="4.6" lengthAdjust="spacingAndGlyphs">C</text></g>
<rect x="643.5" y="169.5" width="6" height="5" fill="#fff" stroke="#8c8c8c" stroke-width="0.8"/><rect x="644.6" y="171.5" width="4" height="1.2" fill="#222"/>
<g transform="translate(39,0)" font-family="Liberation Sans" font-weight="bold" font-size="7" fill="#222"><rect x="634.5" y="172.5" width="5" height="7" fill="#fff" stroke="#a8a8a8" stroke-width="0.8"/><rect x="639" y="174.5" width="5" height="7" fill="#fff" stroke="#a8a8a8" stroke-width="0.8"/><rect x="643.5" y="176.5" width="5.5" height="7" fill="#fff" stroke="#a8a8a8" stroke-width="0.8"/><text x="634.8" y="178.7" textLength="4.4" lengthAdjust="spacingAndGlyphs">A</text><text x="639.4" y="180.7" textLength="4.2" lengthAdjust="spacingAndGlyphs">B</text><text x="644" y="182.7" textLength="4.6" lengthAdjust="spacingAndGlyphs">C</text></g>
<rect x="682.5" y="168.5" width="6.4" height="6.4" fill="#fff" stroke="#8c8c8c" stroke-width="0.8"/><path d="M683.4 171.7 h4.6 M685.7 169.4 v4.6" stroke="#222" stroke-width="1.2"/>
<!-- sigma -->
<path d="M714 169.4 h11.4 v1.8 h-8 l5 5 l-5 5 h8 v1.8 h-11.4 v-1.4 l5.2 -5.4 l-5.2 -5.4z" fill="#2e4055"/>
<!-- print -->
<g transform="translate(762.4,168.8) scale(0.96,0.94)"><path d="M3.5 6 V0.8 h5.5 l2.5 2.5 V6z" fill="#fff" stroke="#8c94a0" stroke-width="0.9"/><rect x="0.5" y="6" width="14" height="6.5" rx="1.6" fill="#3f6794" stroke="#274a74"/><rect x="3.5" y="9.6" width="8" height="5" fill="#fff" stroke="#8c94a0" stroke-width="0.8"/><rect x="10.6" y="7.6" width="2.4" height="1" fill="#cfe0f4"/></g>
<g transform="translate(803,168.8) scale(0.95,0.9)"><path d="M0.8 0.6 h6.6 l3.2 3.2 v11 h-9.8z" fill="#fff" stroke="#7d8db2" stroke-width="0.9"/><path d="M7.4 0.6 v3.2 h3.2" fill="none" stroke="#7d8db2" stroke-width="0.8"/><circle cx="8" cy="9.8" r="3" fill="#fff" stroke="#1d5b8f" stroke-width="1.7"/><path d="M10.3 12.2 l3.2 3.3" stroke="#1d5b8f" stroke-width="2" stroke-linecap="round"/></g>
<g transform="translate(841,169)"><rect x="0.5" y="0.5" width="13" height="13" rx="1" fill="#82a8e0" stroke="#4c79c2"/><rect x="2.6" y="1" width="8.8" height="5.4" fill="#fbfcfe"/><rect x="4" y="2.6" width="6" height="0.9" fill="#8aa6d0"/><rect x="4" y="4.4" width="6" height="0.9" fill="#8aa6d0"/><rect x="3" y="8.6" width="8" height="4.9" fill="#c7d2cc"/><rect x="4" y="9.8" width="1.8" height="3.4" fill="#4a6eaa"/></g>
<!-- mail -->
<g transform="translate(880,171)"><rect x="0.5" y="0.5" width="13.4" height="9" rx="1" fill="#f6c466" stroke="#d9982c"/><path d="M1 1 l6.2 5 l6.2 -5 M1 9 l5 -4.2 M13.4 9 l-5 -4.2" fill="none" stroke="#fbe6b8" stroke-width="1"/></g>
<path d="M901 175.6 h6 l-3 3.4z" fill="#444"/>
<path d="M1300 175.6 h6 l-3 3.4z" fill="#444"/>
</svg>
<!-- ===== report tree controls & scroll arrows ===== -->
<svg class="abs" style="left:223px;top:200px" width="1128" height="632" viewBox="223 200 1128 632">
<path d="M232.5 340 V818" stroke="#9c9c9c"/><path d="M247.5 472 V818" stroke="#9c9c9c"/>
<rect x="226.5" y="327.5" width="12" height="12" rx="1.2" fill="#fff" stroke="#a2a2a2"/><rect x="229" y="333" width="7" height="1" fill="#333"/>
<rect x="241.5" y="459.5" width="12" height="12" rx="1.2" fill="#fff" stroke="#a2a2a2"/><rect x="244" y="465" width="7" height="1" fill="#333"/>
<path d="M1341 213 h6 l-3 -4z" fill="#c4c4c4"/>
<path d="M1341 805 h6 l-3 4z" fill="#4a4a4a"/>
<path d="M236 821.5 v7 l-4 -3.5z" fill="#c4c4c4"/>
<path d="M1324 821.5 v7 l4 -3.5z" fill="#4a4a4a"/>
</svg>
</body></html>
